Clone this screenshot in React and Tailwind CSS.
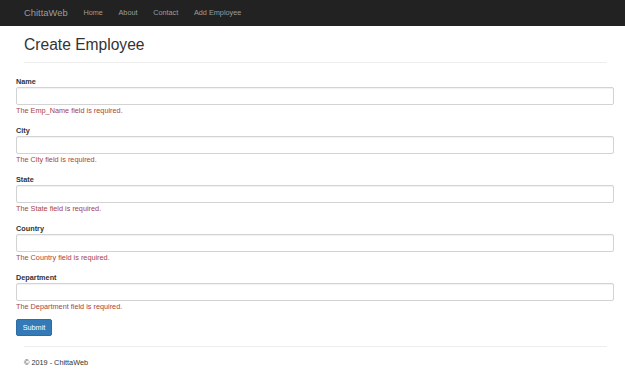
const navLinks = ['Home', 'About', 'Contact', 'Add Employee'];

const fields = [
  ['Name', 'The Emp_Name field is required.'],
  ['City', 'The City field is required.'],
  ['State', 'The State field is required.'],
  ['Country', 'The Country field is required.'],
  ['Department', 'The Department field is required.'],
];

export default function App() {
  return (
    <div className="min-h-[371px] bg-white font-['Liberation_Sans',Arial,sans-serif] text-[#333]">
      <div className="flex h-[26px] items-center bg-[#222] pl-[16px]">
        <span className="px-[8px] text-[9.4px] leading-[26px] text-[#9d9d9d]">ChittaWeb</span>
        {navLinks.map((link) => (
          <span key={link} className="px-[7.8px] text-[7.3px] leading-[26px] text-[#9d9d9d]">
            {link}
          </span>
        ))}
      </div>

      <div className="px-[24px] pr-[18px]">
        <h2 className="mt-[10px] text-[15.6px] leading-[18px] font-normal">Create Employee</h2>
        <div className="mt-[8px] h-px bg-[#eee]" />
      </div>

      <form className="mt-[13px] pl-[16px] pr-[11px]">
        {fields.map(([label, error]) => (
          <div key={label} className="h-[49px]">
            <div className="text-[7.3px] leading-[11px] font-bold">{label}</div>
            <div className="h-[18px] rounded-[2px] border border-[#d3d3d3] bg-white shadow-[inset_0_1px_1px_rgba(0,0,0,0.06)]" />
            <div className="text-[7.3px] leading-[11px] text-[#a94442]">{error}</div>
          </div>
        ))}
        <button
          type="button"
          className="-mt-[2px] block h-[17px] w-[36px] rounded-[2px] border border-[#2e6da4] bg-[#337ab7] text-[7.3px] leading-[15px] text-white"
        >
          Submit
        </button>
      </form>

      <div className="px-[24px] pr-[18px]">
        <div className="mt-[10px] h-px bg-[#eee]" />
        <div className="mt-[10px] text-[7.3px] leading-[11px]">© 2019 - ChittaWeb</div>
      </div>
    </div>
  );
}
